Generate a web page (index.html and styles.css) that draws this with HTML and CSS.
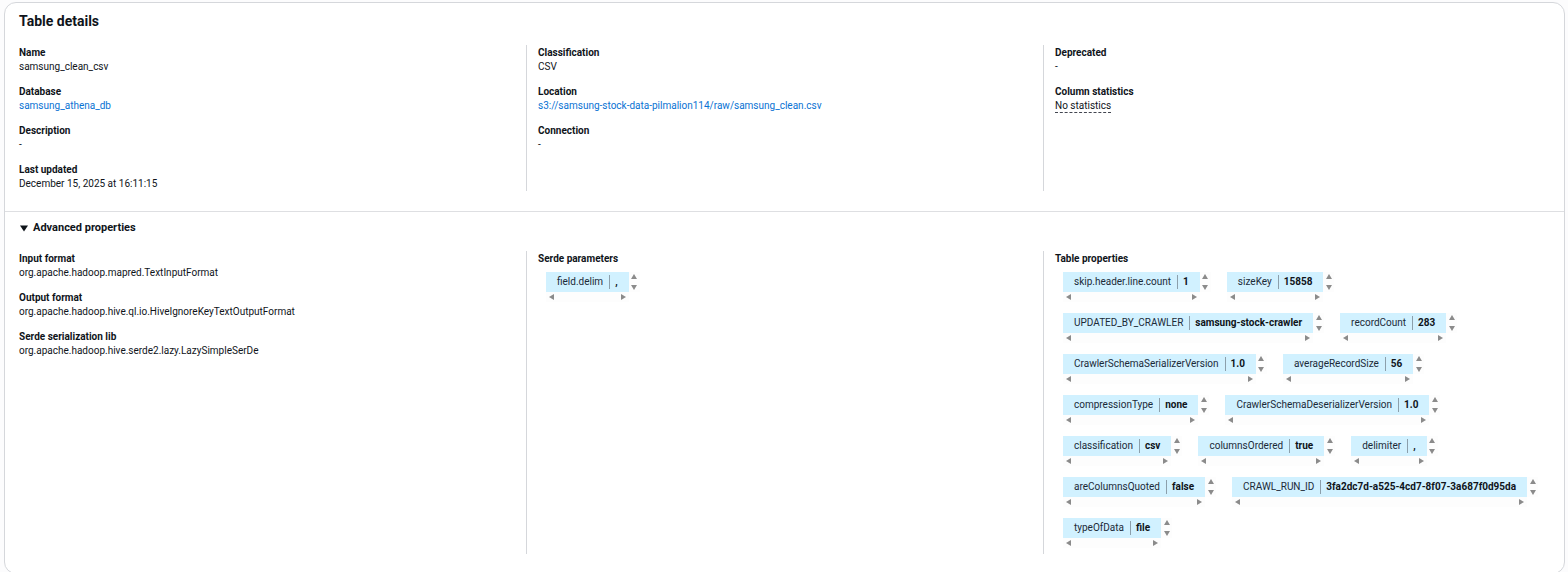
FILE: index.html
```html
<!DOCTYPE html>
<html lang="en">

<head>
    <meta charset="UTF-8">
    <meta name="viewport" content="width=device-width, initial-scale=1.0">
    <title>Table details</title>
    <link rel="stylesheet" href="styles.css">
</head>

<body>
    <main class="card">
        <section class="details">
            <h2>Table details</h2>
            <div class="columns">
                <dl class="column">
                    <div class="pair">
                        <dt>Name</dt>
                        <dd>samsung_clean_csv</dd>
                    </div>
                    <div class="pair">
                        <dt>Database</dt>
                        <dd><a href="#">samsung_athena_db</a></dd>
                    </div>
                    <div class="pair">
                        <dt>Description</dt>
                        <dd>-</dd>
                    </div>
                    <div class="pair">
                        <dt>Last updated</dt>
                        <dd>December 15, 2025 at 16:11:15</dd>
                    </div>
                </dl>
                <dl class="column">
                    <div class="pair">
                        <dt>Classification</dt>
                        <dd>CSV</dd>
                    </div>
                    <div class="pair">
                        <dt>Location</dt>
                        <dd><a href="#">s3://samsung-stock-data-pilmalion114/raw/samsung_clean.csv</a></dd>
                    </div>
                    <div class="pair">
                        <dt>Connection</dt>
                        <dd>-</dd>
                    </div>
                </dl>
                <dl class="column">
                    <div class="pair">
                        <dt>Deprecated</dt>
                        <dd>-</dd>
                    </div>
                    <div class="pair">
                        <dt>Column statistics</dt>
                        <dd><button type="button" class="popover-trigger">No statistics</button></dd>
                    </div>
                </dl>
            </div>
        </section>

        <details class="advanced" open>
            <summary>
                <svg class="caret" viewBox="0 0 8 7" aria-hidden="true">
                    <path d="M0 0.5h8L4 6.5z" />
                </svg>
                Advanced properties
            </summary>
            <div class="columns">
                <dl class="column">
                    <div class="pair">
                        <dt>Input format</dt>
                        <dd>org.apache.hadoop.mapred.TextInputFormat</dd>
                    </div>
                    <div class="pair">
                        <dt>Output format</dt>
                        <dd>org.apache.hadoop.hive.ql.io.HiveIgnoreKeyTextOutputFormat</dd>
                    </div>
                    <div class="pair">
                        <dt>Serde serialization lib</dt>
                        <dd>org.apache.hadoop.hive.serde2.lazy.LazySimpleSerDe</dd>
                    </div>
                </dl>
                <div class="column">
                    <h3>Serde parameters</h3>
                    <ul class="tags">
                        <li class="tag"><p><span>field.delim</span><b>,</b></p><i class="scroll-y"></i><i class="scroll-x"></i></li>
                    </ul>
                </div>
                <div class="column">
                    <h3>Table properties</h3>
                    <ul class="tags">
                        <li class="tag"><p><span>skip.header.line.count</span><b>1</b></p><i class="scroll-y"></i><i class="scroll-x"></i></li>
                        <li class="tag"><p><span>sizeKey</span><b>15858</b></p><i class="scroll-y"></i><i class="scroll-x"></i></li>
                        <li class="tag"><p><span>UPDATED_BY_CRAWLER</span><b>samsung-stock-crawler</b></p><i class="scroll-y"></i><i class="scroll-x"></i></li>
                        <li class="tag"><p><span>recordCount</span><b>283</b></p><i class="scroll-y"></i><i class="scroll-x"></i></li>
                        <li class="tag"><p><span>CrawlerSchemaSerializerVersion</span><b>1.0</b></p><i class="scroll-y"></i><i class="scroll-x"></i></li>
                        <li class="tag"><p><span>averageRecordSize</span><b>56</b></p><i class="scroll-y"></i><i class="scroll-x"></i></li>
                        <li class="tag"><p><span>compressionType</span><b>none</b></p><i class="scroll-y"></i><i class="scroll-x"></i></li>
                        <li class="tag"><p><span>CrawlerSchemaDeserializerVersion</span><b>1.0</b></p><i class="scroll-y"></i><i class="scroll-x"></i></li>
                        <li class="tag"><p><span>classification</span><b>csv</b></p><i class="scroll-y"></i><i class="scroll-x"></i></li>
                        <li class="tag"><p><span>columnsOrdered</span><b>true</b></p><i class="scroll-y"></i><i class="scroll-x"></i></li>
                        <li class="tag"><p><span>delimiter</span><b>,</b></p><i class="scroll-y"></i><i class="scroll-x"></i></li>
                        <li class="tag"><p><span>areColumnsQuoted</span><b>false</b></p><i class="scroll-y"></i><i class="scroll-x"></i></li>
                        <li class="tag"><p><span>CRAWL_RUN_ID</span><b>3fa2dc7d-a525-4cd7-8f07-3a687f0d95da</b></p><i class="scroll-y"></i><i class="scroll-x"></i></li>
                        <li class="tag"><p><span>typeOfData</span><b>file</b></p><i class="scroll-y"></i><i class="scroll-x"></i></li>
                    </ul>
                </div>
            </div>
        </details>
    </main>
</body>

</html>
```
FILE: styles.css
```css
* {
    margin: 0;
    padding: 0;
    box-sizing: border-box;
}

html {
    overflow: hidden;
}

body {
    font-family: Roboto, "Open Sans", sans-serif;
    font-size: 10px;
    line-height: 14px;
    color: #0f141a;
    background-color: #fcfcfd;
    padding: 2px 3px 0 4px;
}

.card {
    background-color: #fff;
    border: 1px solid #d5d7db;
    border-radius: 12px;
}

.details {
    padding: 8px 14px 20px;
    border-bottom: 1px solid #dedfe2;
}

h2 {
    font-size: 14px;
    line-height: 20px;
    margin-bottom: 14px;
}

/* Columns */
.columns {
    display: grid;
    grid-template-columns: repeat(3, 1fr);
    margin: 0 -10px;
}

.column {
    display: flex;
    flex-direction: column;
    gap: 11px;
    padding: 1px 10px 0;
}

.column + .column {
    border-left: 1px solid #d5d7db;
    padding-left: 11px;
}

div.column {
    gap: 6px;
}

dt,
h3 {
    font-size: 10px;
    font-weight: 700;
}

a {
    color: #0972d3;
    text-decoration: none;
}

a:hover {
    text-decoration: underline;
}

.popover-trigger {
    display: block;
    height: 14px;
    font: inherit;
    color: inherit;
    background: none;
    border: none;
    border-bottom: 1px dashed #424650;
    cursor: pointer;
}

/* Advanced properties */
.advanced {
    padding: 7px 14px 19px;
}

summary {
    display: flex;
    align-items: center;
    gap: 5px;
    font-size: 11px;
    font-weight: 700;
    line-height: 18px;
    margin-bottom: 14px;
    padding-left: 1px;
    list-style: none;
    cursor: pointer;
}

.caret {
    width: 8px;
    height: 7px;
    fill: #0f141a;
}

/* Tags */
.tags {
    display: flex;
    flex-wrap: wrap;
    gap: 11px 16px;
    list-style: none;
    padding: 0 0 6px 8px;
}

.tag {
    display: grid;
    grid-template-columns: auto 11px;
    grid-template-rows: 20px 10px;
}

.tag p {
    display: flex;
    align-items: center;
    color: #1b2a38;
    background-color: #d1f1ff;
    padding: 0 11px;
}

.tag span {
    border-right: 1px solid #8c9fab;
    padding-right: 6px;
    margin-right: 5px;
}

.tag b {
    color: #0f141a;
}

/* Scroll arrows around a tag */
.scroll-x,
.scroll-y {
    display: flex;
    align-items: center;
    justify-content: space-between;
    background-color: #fdfdfd;
}

.scroll-y {
    flex-direction: column;
    padding: 2px 0;
}

.scroll-x {
    padding: 0 3px;
}

.scroll-x::before,
.scroll-x::after,
.scroll-y::before,
.scroll-y::after {
    content: "";
    border: 3px solid transparent;
}

.scroll-y::before {
    border-top: 0;
    border-bottom: 5px solid #8b8b8b;
}

.scroll-y::after {
    border-bottom: 0;
    border-top: 5px solid #8b8b8b;
}

.scroll-x::before {
    border-left: 0;
    border-right: 5px solid #8b8b8b;
}

.scroll-x::after {
    border-right: 0;
    border-left: 5px solid #8b8b8b;
}

@media (max-width: 900px) {
    html {
        overflow: auto;
    }

    .columns {
        grid-template-columns: 1fr;
        gap: 11px;
    }
}
```
